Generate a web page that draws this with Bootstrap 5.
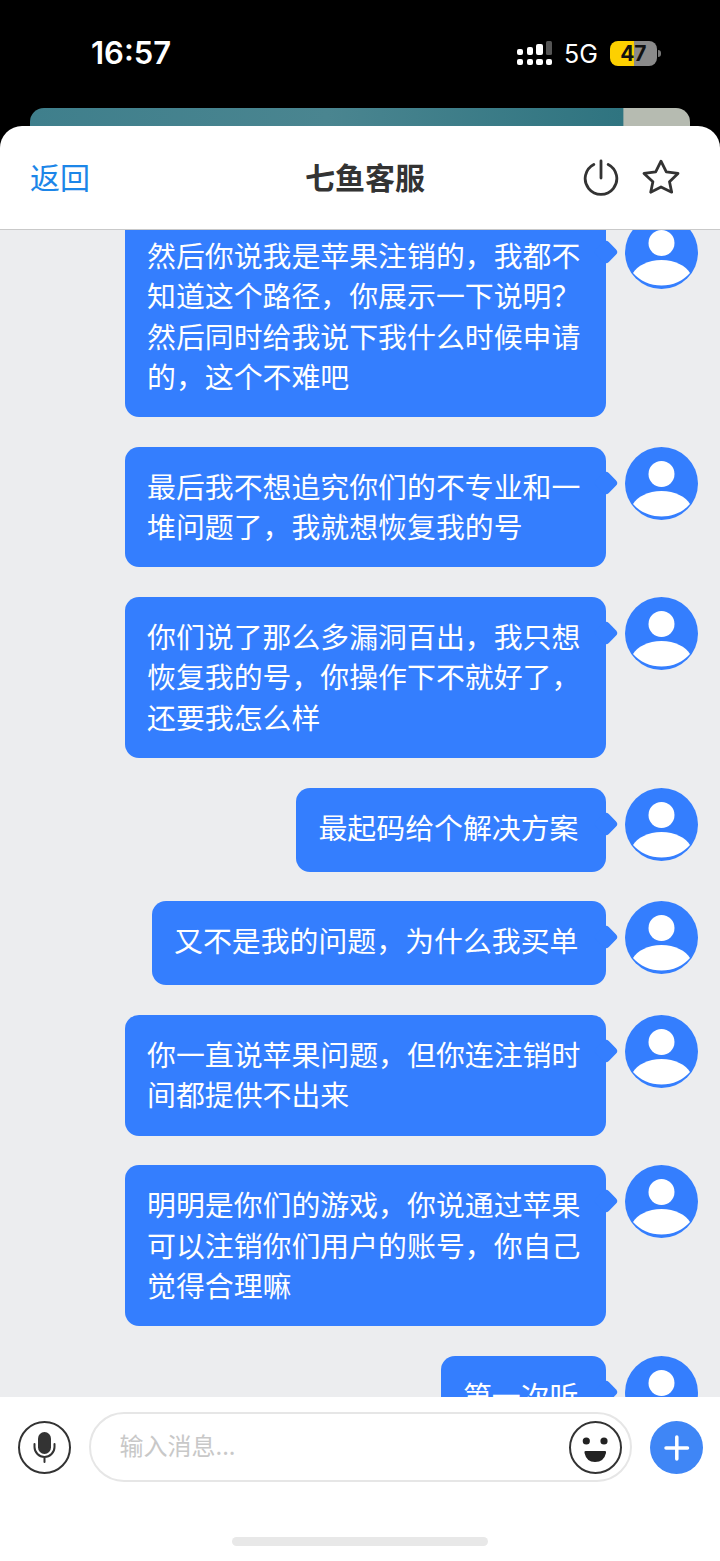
<!DOCTYPE html>
<html lang="zh-CN">
<head>
<meta charset="UTF-8">
<title>七鱼客服</title>
<link href="https://cdn.jsdelivr.net/npm/bootstrap@5.3.3/dist/css/bootstrap.min.css" rel="stylesheet">
<style>
    body { background: #000; width: 720px; height: 1561px; overflow: hidden; font-family: "Noto Sans CJK SC", sans-serif; }
    .phone-page { height: 1561px; }
    .status-row { height: 108px; color: #fff; padding: 35px 0 0 91px; }
    .clock-txt { font-family: Inter, sans-serif; font-weight: 600; font-size: 31px; line-height: 36px; width: 426px; }
    .signal-ico { width: 36px; height: 25px; margin-top: 6px; }
    .net-txt { font-family: Inter, sans-serif; font-size: 25px; line-height: 38px; margin: 0 12px 0 11px; }
    .batt-box { width: 47px; height: 25px; border-radius: 8px; margin-top: 6px; background: linear-gradient(90deg, #fdd000 50%, #8a8a8a 50%); color: #111; font: 700 21px/25px Inter, sans-serif; text-align: center; }
    .batt-nub { width: 3px; height: 7px; margin: 15px 0 0 1px; background: #777; border-radius: 0 3px 3px 0; }
    .peek-card { height: 18px; margin: 0 30px; border-radius: 14px 14px 0 0; background: linear-gradient(90deg, #3f7f8c 0%, #4a8590 45%, #2f7480 89.8%, #b6bbb1 90%); }
    .top-bar { height: 104px; background: #fff; border-radius: 22px 22px 0 0; border-bottom: 1px solid #c9c9c9; padding: 0 40px 2px 30px; }
    .back-link { width: 275px; font-size: 30px; color: #1c86e8; text-decoration: none; }
    .top-title { font-size: 30px; font-weight: 700; color: #333; }
    .top-icons { gap: 23px; }
    .chat-area { background: #ecedef; }
    .chat-list { margin-top: -14px; padding-right: 22px; gap: 29.7px; }
    .msg-bubble { max-width: 481px; min-height: 84px; padding: 18px 25.4px 22px 22px; background: #347efe; color: #fff; border-radius: 14px; font-size: 28.9px; line-height: 40.3px; }
    .msg-short { padding-right: 27.5px; }
    .msg-bubble::after { content: ""; position: absolute; right: -9px; top: 27px; width: 18px; height: 18px; background: #347efe; border-radius: 4px; transform: rotate(45deg); }
    .user-pic { width: 73px; height: 73px; margin-left: 19px; }
    .input-bar { height: 164px; background: #fff; }
    .input-row { padding: 15px 0 0 17.5px; gap: 18px; }
    .round-btn { width: 53px; height: 53px; }
    .msg-pill { width: 543px; height: 70px; border: 2px solid #e6e6e6; border-radius: 35px; padding: 0 7.5px 0 29px; }
    .msg-input { font-size: 24px; color: #333; border: 0; padding: 0 0 4px; box-shadow: none; }
    .msg-input::placeholder { color: #c8c8c8; }
    .home-pill { width: 256px; height: 9px; margin: 55px auto 0; background: #e8e8e8; border-radius: 5px; }
</style>
</head>
<body>
<svg width="0" height="0" class="position-absolute">
    <symbol id="user-ico" viewBox="0 0 73 73">
        <circle cx="36.5" cy="36.5" r="36.5" fill="#347efe"/>
        <circle cx="36.5" cy="27" r="13" fill="#fff"/>
        <path d="M8 57C12 50 23 44 36.500 44C50 44 61 50 65 57C58 65 48 69.500 36.500 69.500C25 69.500 15 65 8 57Z" fill="#fff"/>
    </symbol>
</svg>
<div class="phone-page d-flex flex-column">
    <div class="status-row d-flex align-items-start flex-shrink-0">
        <div class="clock-txt">16:57</div>
        <svg class="signal-ico" viewBox="0 0 36 25" fill="#fff">
            <rect x="0" y="8" width="6" height="6" rx="2"/>
            <rect x="10" y="6" width="6" height="8" rx="2"/>
            <rect x="19" y="3" width="7" height="11" rx="2"/>
            <rect x="29" y="0" width="6" height="14" rx="1.5" fill="#555"/>
            <rect x="0" y="18" width="6" height="6" rx="2"/>
            <rect x="10" y="18" width="6" height="6" rx="2"/>
            <rect x="19" y="18" width="7" height="6" rx="2"/>
            <rect x="29" y="18" width="6" height="6" rx="2"/>
        </svg>
        <div class="net-txt">5G</div>
        <div class="batt-box">47</div>
        <div class="batt-nub"></div>
    </div>
    <div class="peek-card flex-shrink-0"></div>
    <div class="top-bar d-flex align-items-center flex-shrink-0">
        <a class="back-link" href="#">返回</a>
        <div class="top-title">七鱼客服</div>
        <div class="top-icons ms-auto d-flex align-items-center">
            <svg width="36" height="38" viewBox="0 0 36 38" fill="none" stroke="#333" stroke-width="2.8" stroke-linecap="round">
                <path d="M18 3V20"/>
                <path d="M10.800 6.500A15.800 15.800 0 1 0 25.200 6.500"/>
            </svg>
            <svg width="38" height="36" viewBox="0 0 38 36" fill="none" stroke="#333" stroke-width="2.8" stroke-linejoin="round">
                <path d="M19 2.200L24.300 12.800L36 14.400L27.500 22.700L29.700 33.200L19 28L8.700 33.200L10.900 22.700L2 14.400L13.700 12.800Z"/>
            </svg>
        </div>
    </div>
    <div class="chat-area flex-grow-1 overflow-hidden">
        <div class="chat-list d-flex flex-column">
            <div class="d-flex justify-content-end align-items-start">
                <div class="msg-bubble position-relative">然后你说我是苹果注销的，我都不知道这个路径，你展示一下说明？然后同时给我说下我什么时候申请的，这个不难吧</div>
                <svg class="user-pic"><use href="#user-ico"/></svg>
            </div>
            <div class="d-flex justify-content-end align-items-start">
                <div class="msg-bubble position-relative">最后我不想追究你们的不专业和一堆问题了，我就想恢复我的号</div>
                <svg class="user-pic"><use href="#user-ico"/></svg>
            </div>
            <div class="d-flex justify-content-end align-items-start">
                <div class="msg-bubble position-relative">你们说了那么多漏洞百出，我只想恢复我的号，你操作下不就好了，还要我怎么样</div>
                <svg class="user-pic"><use href="#user-ico"/></svg>
            </div>
            <div class="d-flex justify-content-end align-items-start">
                <div class="msg-bubble msg-short position-relative">最起码给个解决方案</div>
                <svg class="user-pic"><use href="#user-ico"/></svg>
            </div>
            <div class="d-flex justify-content-end align-items-start">
                <div class="msg-bubble msg-short position-relative">又不是我的问题，为什么我买单</div>
                <svg class="user-pic"><use href="#user-ico"/></svg>
            </div>
            <div class="d-flex justify-content-end align-items-start">
                <div class="msg-bubble position-relative">你一直说苹果问题，但你连注销时间都提供不出来</div>
                <svg class="user-pic"><use href="#user-ico"/></svg>
            </div>
            <div class="d-flex justify-content-end align-items-start">
                <div class="msg-bubble position-relative">明明是你们的游戏，你说通过苹果可以注销你们用户的账号，你自己觉得合理嘛</div>
                <svg class="user-pic"><use href="#user-ico"/></svg>
            </div>
            <div class="d-flex justify-content-end align-items-start">
                <div class="msg-bubble msg-short position-relative">第一次听</div>
                <svg class="user-pic"><use href="#user-ico"/></svg>
            </div>
        </div>
    </div>
    <div class="input-bar flex-shrink-0">
        <div class="input-row d-flex align-items-center">
            <svg class="round-btn flex-shrink-0" viewBox="0 0 53 53" fill="none" stroke="#333">
                <circle cx="26.5" cy="26.5" r="25.5" stroke-width="2"/>
                <rect x="20" y="11" width="13" height="22" rx="6.5" fill="#333" stroke="none"/>
                <path d="M16.500 23V26A10 10 0 0 0 36.500 26V23M26.500 36V41" stroke-width="2" stroke-linecap="round"/>
            </svg>
            <div class="msg-pill d-flex align-items-center flex-shrink-0">
                <input class="msg-input form-control" type="text" placeholder="输入消息...">
                <svg class="round-btn flex-shrink-0" viewBox="0 0 53 53" fill="#222">
                    <circle cx="26.5" cy="26.5" r="25.5" fill="none" stroke="#333" stroke-width="2"/>
                    <circle cx="17.300" cy="20" r="3.600"/>
                    <circle cx="35" cy="20" r="3.600"/>
                    <path d="M16.500 30H36Q37.500 30 37 32Q35 41 26 41Q17.500 41 15.500 32Q15 30 16.500 30Z"/>
                </svg>
            </div>
            <svg class="round-btn flex-shrink-0" viewBox="0 0 53 53" fill="none" stroke="#fff" stroke-width="3.5" stroke-linecap="round">
                <circle cx="26.5" cy="26.5" r="26.5" fill="#3f86f6" stroke="none"/>
                <path d="M16 27H37.500M26.800 16V38"/>
            </svg>
        </div>
        <div class="home-pill"></div>
    </div>
</div>
<script src="https://cdn.jsdelivr.net/npm/bootstrap@5.3.3/dist/js/bootstrap.bundle.min.js"></script>
</body>
</html>
